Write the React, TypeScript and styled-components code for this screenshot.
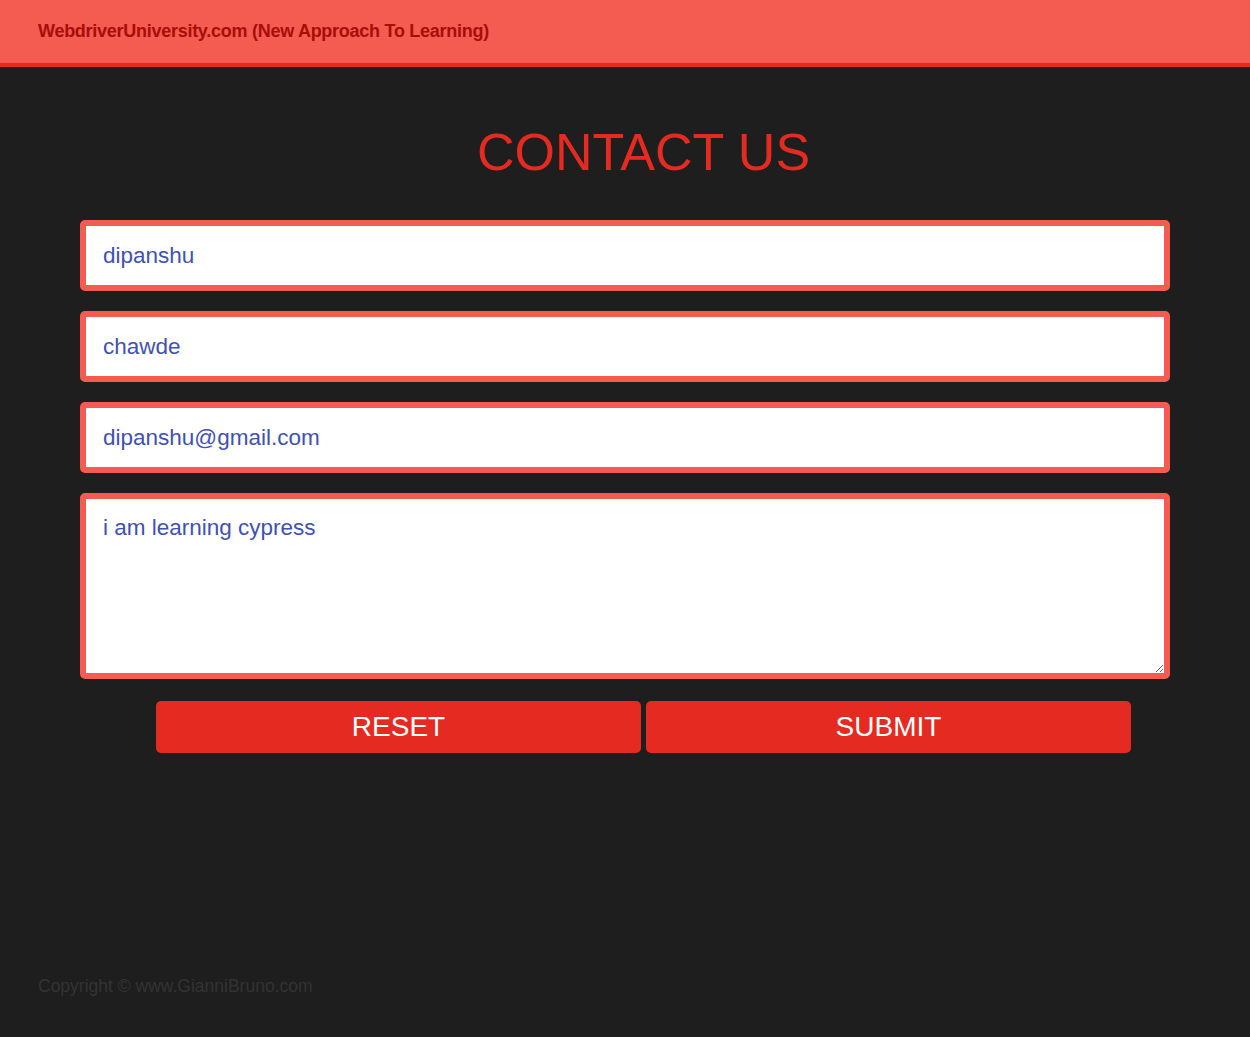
import React, { useEffect, useRef } from 'react';
import styled, { createGlobalStyle } from 'styled-components';

const theme = {
    salmon: '#f45b51',
    red: '#e52b21',
    darkRed: '#a80d08',
    bg: '#1e1e1e',
    inputText: '#3f51b5',
    muted: '#333333',
};

const GlobalStyle = createGlobalStyle`
    html, body {
        margin: 0;
        padding: 0;
        background-color: ${theme.bg};
        font-family: "Liberation Sans", Arial, sans-serif;
    }
`;

export const Wrapper = styled.div`
    width: 100vw;
    min-height: 100vh;
    display: flex;
    flex-direction: column;
    background-color: ${theme.bg};
    overflow: hidden;
`;

export const HeaderBar = styled.div`
    display: flex;
    align-items: center;
    height: 63px;
    padding: 0 38px;
    box-sizing: content-box;
    background-color: ${theme.salmon};
    border-bottom: 4px solid ${theme.red};
`;

export const HeaderTitle = styled.div`
    color: ${theme.darkRed};
    font-size: 18px;
    font-weight: 700;
    letter-spacing: -0.27px;
`;

export const Content = styled.div`
    flex: 1 1 0;
    display: flex;
    flex-direction: column;
    padding: 56px 80px 0 80px;
`;

export const Centered = styled.div`
    width: 975px;
    margin-left: 76px;
    display: flex;
    justify-content: center;
    gap: 5px;
`;

export const Title = styled.h1`
    margin: 0 0 39px 0;
    color: ${theme.red};
    font-size: 52px;
    font-weight: 400;
    line-height: 58px;
`;

const fieldBase = `
    display: block;
    width: 100%;
    box-sizing: border-box;
    border: 6px solid ${theme.salmon};
    border-radius: 5px;
    background-color: #ffffff;
    color: ${theme.inputText};
    font-family: "Liberation Sans", Arial, sans-serif;
    font-size: 22.5px;
    padding: 0 16px 0 17px;
    outline: none;
    caret-color: #1a237e;
`;

export const Input = styled.input`
    ${fieldBase}
    height: 71px;
    margin-bottom: 20px;
`;

export const TextArea = styled.textarea`
    ${fieldBase}
    height: 186px;
    padding: 16px 16px 16px 17px;
    line-height: 26px;
    resize: both;
    margin-bottom: 22px;
`;

export const Button = styled.button`
    flex: 1 1 0;
    height: 52px;
    border: none;
    border-radius: 5px;
    background-color: ${theme.red};
    color: #ffffff;
    font-family: "Liberation Sans", Arial, sans-serif;
    font-size: 28px;
    text-transform: uppercase;
    cursor: pointer;
`;

export const Footer = styled.div`
    padding: 0 38px 40px 38px;
    margin-top: auto;
    color: ${theme.muted};
    font-size: 17.5px;
`;

export default function App() {
    const area = useRef<HTMLTextAreaElement>(null);

    useEffect(() => {
        const el = area.current;
        if (el) {
            el.focus();
            el.setSelectionRange(el.value.length, el.value.length);
        }
    }, []);

    return (
        <>
            <GlobalStyle />
            <Wrapper>
                <HeaderBar>
                    <HeaderTitle>WebdriverUniversity.com (New Approach To Learning)</HeaderTitle>
                </HeaderBar>
                <Content>
                    <Centered>
                        <Title>CONTACT US</Title>
                    </Centered>
                    <Input type="text" defaultValue="dipanshu" />
                    <Input type="text" defaultValue="chawde" />
                    <Input type="email" defaultValue="dipanshu@gmail.com" />
                    <TextArea ref={area} defaultValue="i am learning cypress" />
                    <Centered>
                        <Button type="reset">Reset</Button>
                        <Button type="submit">Submit</Button>
                    </Centered>
                </Content>
                <Footer>Copyright © www.GianniBruno.com</Footer>
            </Wrapper>
        </>
    );
}
